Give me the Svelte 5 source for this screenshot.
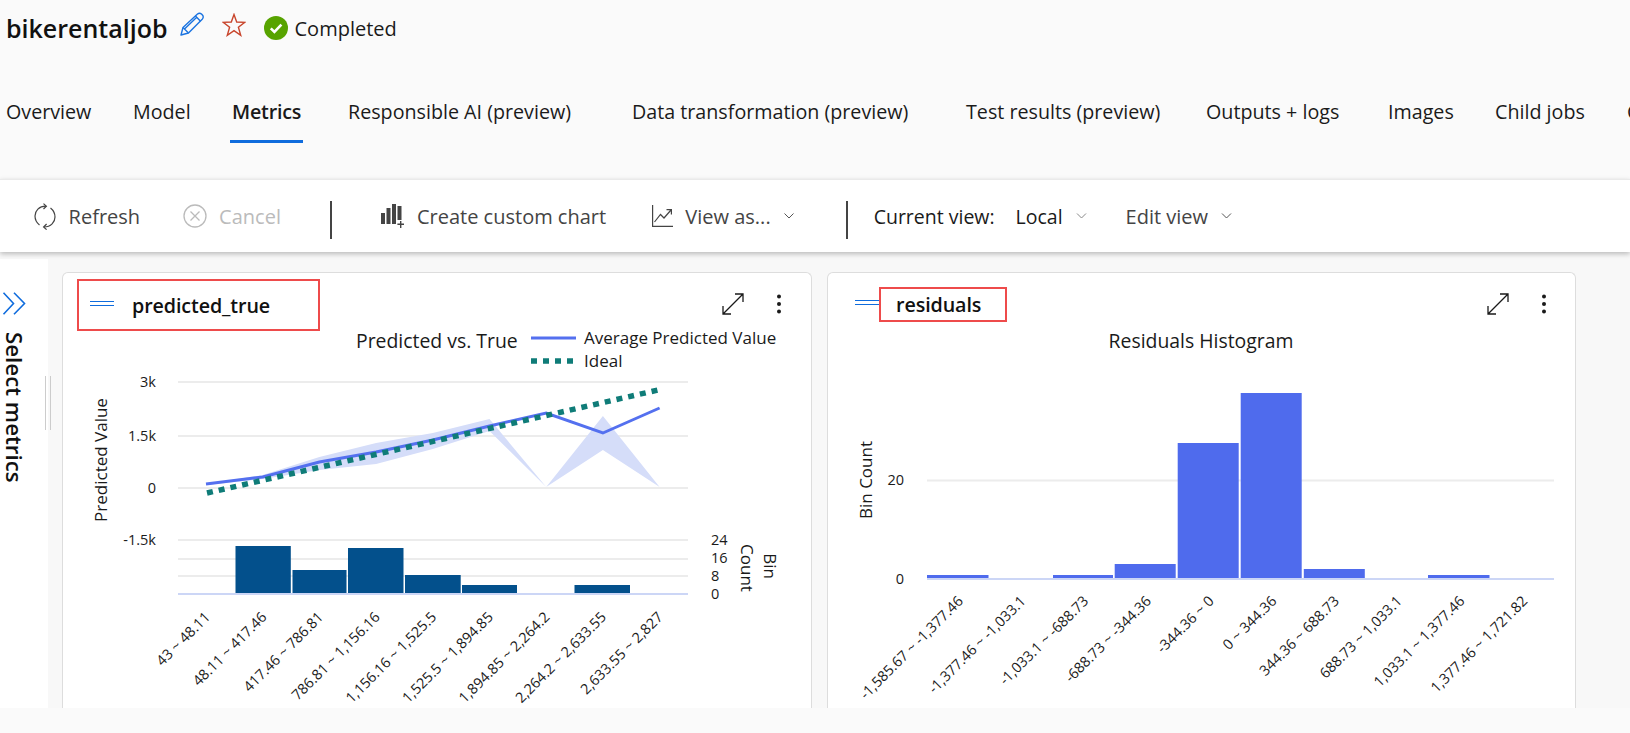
<script>
	const tabs = [
		{ label: 'Overview', w: 127 },
		{ label: 'Model', w: 99 },
		{ label: 'Metrics', w: 116, active: true },
		{ label: 'Responsible AI (preview)', w: 284 },
		{ label: 'Data transformation (preview)', w: 334 },
		{ label: 'Test results (preview)', w: 240 },
		{ label: 'Outputs + logs', w: 182 },
		{ label: 'Images', w: 107 },
		{ label: 'Child jobs', w: 132 },
		{ label: 'Code', w: 60 }
	];

	const pts = (a) => a.map((p) => p.join(',')).join(' ');

	const binX = (i) => 206 + i * 56.7;
	const avg = [485, 478, 463, 453, 441, 427, 414, 434, 409];
	const avgLine = pts(avg.map((y, i) => [binX(i), y]));
	const upper = [485, 476, 458, 444, 434, 420, 488, 417, 488];
	const lower = [486, 480, 471, 465, 450, 432, 488, 451, 488];
	const band = pts([
		...upper.map((y, i) => [binX(i), y]),
		...lower.map((y, i) => [binX(i), y]).reverse()
	]);

	const countBars = [
		[235.5, 55.3, 547],
		[292.5, 54, 571],
		[348, 55.5, 549],
		[405, 55.7, 576],
		[462, 55, 586],
		[574.5, 55.5, 586]
	];
	const predLabels = [
		'43 ~ 48.11', '48.11 ~ 417.46', '417.46 ~ 786.81', '786.81 ~ 1,156.16', '1,156.16 ~ 1,525.5',
		'1,525.5 ~ 1,894.85', '1,894.85 ~ 2,264.2', '2,264.2 ~ 2,633.55', '2,633.55 ~ 2,827'
	];

	const resBars = [
		[927, 61.5, 576],
		[1053, 60, 576],
		[1114.7, 61, 565],
		[1177.7, 61, 444],
		[1240.7, 61, 394],
		[1303.8, 61, 570],
		[1428, 61.5, 576]
	];
	const resLabels = [
		'-1,585.67 ~ -1,377.46', '-1,377.46 ~ -1,033.1', '-1,033.1 ~ -688.73', '-688.73 ~ -344.36', '-344.36 ~ 0',
		'0 ~ 344.36', '344.36 ~ 688.73', '688.73 ~ 1,033.1', '1,033.1 ~ 1,377.46', '1,377.46 ~ 1,721.82'
	];
</script>

<div class="page">
	<header class="title-row">
		<h1>bikerentaljob</h1>
		<svg class="pencil" width="24" height="24" viewBox="0 0 24 24" fill="none" stroke="#1a73e0" stroke-width="1.4" stroke-linejoin="round">
			<path d="M1 23 L3 15.5 L17.5 2 Q19.5 .3 21.5 2 L22.6 3.2 Q24 5.2 22.2 7.2 L8.5 21 Z" />
			<path d="M3 15.5 L8.5 21 M15.5 4 L20.5 9.2 M4.5 17 L16.5 5.5" />
		</svg>
		<svg class="star" width="24" height="24" viewBox="0 0 24 24" fill="none" stroke="#c8452c" stroke-width="1.4" stroke-linejoin="miter">
			<polygon points="12,1.5 14.7,9 22.8,9.3 16.4,14.3 18.7,22.3 12,17.6 5.3,22.3 7.6,14.3 1.2,9.3 9.3,9" />
		</svg>
		<svg class="check" width="24" height="24" viewBox="0 0 24 24">
			<circle cx="12" cy="12" r="12" fill="#57a300" />
			<path d="M6.8 12.4 L10.4 16 L17.4 8.6" fill="none" stroke="#fff" stroke-width="2.6" />
		</svg>
		<span class="status">Completed</span>
	</header>

	<nav class="tabs">
		{#each tabs as tab}
			<div class="tab" class:active={tab.active} style="width: {tab.w}px"><span>{tab.label}</span></div>
		{/each}
	</nav>

	<div class="toolbar">
		<svg class="ico refresh" width="22" height="27" viewBox="0 0 22 27" fill="none" stroke="#444" stroke-width="1.2">
			<path d="M12 3.2 C5 3 1 8 1 13 C1 17 3 20 5.5 22" />
			<path d="M10 24 C17 24 21 19 21 14 C21 10 19 7 16.5 5" />
			<path d="M9.5 .6 L12.4 3.2 L9.5 6 M12.6 21 L9.6 24 L12.6 26.6" />
		</svg>
		<span class="btn refresh-label">Refresh</span>
		<svg class="ico cancel" width="24" height="24" viewBox="0 0 24 24" fill="none" stroke="#bbb" stroke-width="1.3">
			<circle cx="12" cy="12" r="11" />
			<path d="M7.5 7.5 L16.5 16.5 M16.5 7.5 L7.5 16.5" />
		</svg>
		<span class="btn disabled">Cancel</span>
		<i class="sep first"></i>
		<svg class="ico chart" width="24" height="24" viewBox="0 0 24 24" fill="#444">
			<rect x="0" y="9" width="4" height="11" />
			<rect x="5.5" y="4" width="4" height="16" />
			<rect x="11" y="0" width="4" height="20" />
			<rect x="16.5" y="2" width="4" height="14" />
			<path d="M19 17 h1.4 v2.6 H23 V21 h-2.6 v3 H19 v-3 h-2.6 v-1.4 H19 Z" />
		</svg>
		<span class="btn create">Create custom chart</span>
		<svg class="ico line" width="21" height="22" viewBox="0 0 21 22" fill="none" stroke="#444" stroke-width="1.2">
			<path d="M.6 0 V21.4 H21" />
			<path d="M2.5 17 L8.5 9.5 L12 13 L19 5 M14.5 4.6 H19.4 V9.5" />
		</svg>
		<span class="btn view-as">View as...</span>
		<svg class="chev" width="10" height="6" viewBox="0 0 10 6" fill="none" stroke="#555"><path d="M.5 .5 L5 5 L9.5 .5" /></svg>
		<i class="sep second"></i>
		<span class="current">Current view:</span>
		<span class="local">Local</span>
		<svg class="chev" width="11" height="6" viewBox="0 0 10 6" fill="none" stroke="#888"><path d="M.5 .5 L5 5 L9.5 .5" /></svg>
		<span class="btn edit">Edit view</span>
		<svg class="chev" width="11" height="6" viewBox="0 0 10 6" fill="none" stroke="#555"><path d="M.5 .5 L5 5 L9.5 .5" /></svg>
	</div>

	<main class="main">
		<aside class="sidebar">
			<svg width="24" height="23" viewBox="0 0 24 23" fill="none" stroke="#0f6cdd" stroke-width="1.6">
				<path d="M1.5 .8 L11.5 11.5 L1.5 22.2 M12 .8 L22.5 11.5 L12 22.2" />
			</svg>
			<div class="side-label">Select metrics</div>
		</aside>
		<div class="handle"></div>

		<section class="card">
			<div class="card-head">
				<div class="marked first-mark">
					<div class="grip"></div>
					<span class="name">predicted_true</span>
				</div>
				{@render actions()}
			</div>
			<svg class="plot" width="748" height="377" viewBox="63 331 748 377">
				<text class="title" x="356" y="349">Predicted vs. True</text>
				<line class="legend-a" x1="531" x2="576" y1="339" y2="339" />
				<line class="legend-b" x1="531" x2="576" y1="362" y2="362" />
				<text class="legend" x="584" y="345">Average Predicted Value</text>
				<text class="legend" x="584" y="368">Ideal</text>

				{#each [383, 437, 489, 541, 560, 577] as y}
					<line class="grid" x1="178" x2="688" y1={y} y2={y} />
				{/each}
				{#each [['3k', 383], ['1.5k', 437], ['0', 489], ['-1.5k', 541]] as [t, y]}
					<text class="tick end" x="156" y={y + 5}>{t}</text>
				{/each}
				<text class="axis" transform="translate(107 461) rotate(-90)">Predicted Value</text>

				<polygon class="band" points={band} />
				<polyline class="avg" points={avgLine} />
				<line class="ideal" x1="207" y1="494" x2="658" y2="391" />

				{#each countBars as [x, w, top]}
					<rect class="count-bar" x={x} y={top} width={w} height={595 - top} />
				{/each}
				<line class="base" x1="178" x2="688" y1="595" y2="595" />
				{#each [['24', 541], ['16', 559], ['8', 577], ['0', 595]] as [t, y]}
					<text class="tick" x="711" y={y + 5}>{t}</text>
				{/each}
				<text class="axis" transform="translate(741 569) rotate(90)">Count</text>
				<text class="axis" transform="translate(764 567) rotate(90)">Bin</text>

				{#each predLabels as label, i}
					<text class="xlab" transform="translate({211 + i * 56.6} 619) rotate(-45)">{label}</text>
				{/each}
			</svg>
		</section>

		<section class="card">
			<div class="card-head second-head">
				<div class="grip"></div>
				<div class="marked second-mark">
					<span class="name">residuals</span>
				</div>
				{@render actions()}
			</div>
			<svg class="plot" width="747" height="377" viewBox="828 331 747 377">
				<text class="title mid" x="1201" y="349">Residuals Histogram</text>
				<line class="grid" x1="927" x2="1554" y1="481.5" y2="481.5" />
				<text class="tick end" x="904" y="486">20</text>
				<text class="tick end" x="904" y="585">0</text>
				<text class="axis" transform="translate(872 481) rotate(-90)">Bin Count</text>
				{#each resBars as [x, w, top]}
					<rect class="res-bar" x={x} y={top} width={w} height={580 - top} />
				{/each}
				<line class="base" x1="927" x2="1554" y1="580" y2="580" />
				{#each resLabels as label, i}
					<text class="xlab" transform="translate({964 + i * 62.7} 603) rotate(-45)">{label}</text>
				{/each}
			</svg>
		</section>
	</main>
</div>

{#snippet actions()}
	<div class="actions">
		<svg width="22" height="22" viewBox="0 0 22 22" fill="none" stroke="#1a1a1a" stroke-width="1.3">
			<path d="M1 21 L21 1 M13 1 H21 V9 M1 13 V21 H9" />
		</svg>
		<svg class="dots" width="6" height="20" viewBox="0 0 6 20" fill="#1a1a1a">
			<circle cx="3" cy="2.5" r="2" />
			<circle cx="3" cy="10" r="2" />
			<circle cx="3" cy="17.5" r="2" />
		</svg>
	</div>
{/snippet}

<style>
	:global(body) {
		margin: 0;
		background: #fafafa;
		overflow: hidden;
	}
	.page {
		width: 1630px;
		height: 733px;
		overflow: hidden;
		font-family: 'Open Sans', 'Noto Sans', sans-serif;
		color: #1a1a1a;
	}
	.title-row {
		display: flex;
		align-items: center;
		height: 56px;
		padding-left: 6px;
	}
	h1 {
		margin: 0;
		font-size: 25px;
		font-weight: 600;
		color: #111;
	}
	.pencil {
		margin: -8px 0 0 12px;
	}
	.star {
		margin: -6px 0 0 18px;
	}
	.check {
		margin: 0 0 0 18px;
	}
	.status {
		margin-left: 7px;
		font-size: 20px;
	}
	.tabs {
		display: flex;
		height: 123px;
		padding-left: 6px;
		box-sizing: border-box;
		padding-top: 40px;
		width: 1700px;
	}
	.tab {
		flex: none;
		font-size: 19.7px;
		line-height: 32px;
		white-space: nowrap;
	}
	.tab span {
		display: inline-block;
		height: 44px;
	}
	.tab.active {
		font-weight: 600;
		letter-spacing: -0.2px;
	}
	.tab.active span {
		border-bottom: 3px solid #0f6cdd;
		margin-left: -2px;
		padding: 0 2px;
	}
	.toolbar {
		display: flex;
		align-items: center;
		height: 73px;
		background: #fff;
		border-top: 1px solid #eaeaea;
		box-sizing: border-box;
		padding-left: 34px;
		box-shadow: 0 2px 5px rgba(0, 0, 0, 0.25);
		position: relative;
		z-index: 1;
		font-size: 20px;
		white-space: nowrap;
	}
	.btn {
		color: #444;
		font-weight: 500;
	}
	.refresh-label {
		margin-left: 12.6px;
	}
	.ico.cancel {
		margin-left: 43px;
	}
	.disabled {
		margin-left: 12px;
		color: #bbb;
		font-weight: 500;
	}
	.sep {
		display: block;
		width: 2px;
		height: 38px;
		background: #444;
		flex: none;
		margin-top: 8px;
	}
	.sep.first {
		margin-left: 49px;
	}
	.ico.chart {
		margin-left: 49px;
	}
	.create {
		margin-left: 12px;
	}
	.ico.line {
		margin-left: 45.5px;
	}
	.view-as {
		margin-left: 12.7px;
	}
	.chev {
		margin-left: 13px;
	}
	.sep.second {
		margin-left: 52px;
	}
	.current {
		margin-left: 26px;
		font-size: 19.5px;
	}
	.local {
		margin-left: 21px;
		font-size: 19.5px;
	}
	.edit {
		margin-left: 39px;
	}
	.main {
		display: flex;
		position: relative;
		height: 456px;
		background: #f8f8f8;
		padding-top: 20px;
		box-sizing: border-box;
		overflow: hidden;
	}
	.sidebar {
		position: absolute;
		left: 0;
		top: 7px;
		bottom: 0;
		width: 48px;
		background: #fff;
		box-sizing: border-box;
		padding: 33px 0 0 2px;
	}
	.side-label {
		writing-mode: vertical-rl;
		font-size: 22.3px;
		font-weight: 600;
		color: #111;
		margin-top: 12px;
		line-height: 24px;
	}
	.handle {
		position: absolute;
		left: 45px;
		top: 124px;
		width: 4px;
		height: 54px;
		border-left: 1px solid #ccc;
		border-right: 1px solid #ccc;
	}
	.card {
		flex: none;
		width: 750px;
		height: 440px;
		margin-left: 62px;
		box-sizing: border-box;
		background: #fff;
		border: 1px solid #ddd;
		border-bottom: 0;
		border-radius: 6px 6px 0 0;
	}
	.card + .card {
		margin-left: 15px;
		width: 749px;
	}
	.card-head {
		display: flex;
		align-items: flex-start;
		height: 57px;
		box-sizing: border-box;
		position: relative;
	}
	.marked {
		display: flex;
		align-items: center;
		box-sizing: border-box;
		border: 2px solid #ee4b4b;
	}
	.first-mark {
		width: 243px;
		height: 52px;
		margin: 6px 0 0 14px;
		padding-left: 11px;
	}
	.second-head {
		padding-left: 27px;
	}
	.second-head .grip {
		margin-top: 27px;
	}
	.second-mark {
		width: 128px;
		height: 35px;
		margin-top: 14px;
		padding-left: 15px;
	}
	.grip {
		flex: none;
		width: 24px;
		height: 5px;
		box-sizing: border-box;
		border-top: 1px solid #0f6cdd;
		border-bottom: 1px solid #0f6cdd;
	}
	.first-mark .grip {
		margin-top: -4px;
	}
	.name {
		font-size: 19.7px;
		font-weight: 600;
		color: #111;
		white-space: nowrap;
		letter-spacing: -0.1px;
	}
	.first-mark .name {
		margin-left: 18px;
	}
	.actions {
		margin-left: auto;
		display: flex;
		align-items: center;
		gap: 32px;
		margin-top: 20px;
		padding-right: 29px;
	}
	.second-head .actions {
		padding-right: 28px;
	}
	.plot {
		display: block;
		overflow: visible;
		font-family: 'Open Sans', 'Noto Sans', sans-serif;
	}
	.plot text {
		fill: #1a1a1a;
	}
	.title {
		font-size: 19.4px;
	}
	.title.mid {
		text-anchor: middle;
	}
	.legend {
		font-size: 17px;
	}
	.legend-a {
		stroke: #5470ef;
		stroke-width: 3;
	}
	.legend-b {
		stroke: #0f7c78;
		stroke-width: 5.5;
		stroke-dasharray: 6 6;
	}
	.grid {
		stroke: #ececec;
		stroke-width: 2;
	}
	.tick {
		font-size: 14.5px;
	}
	.end {
		text-anchor: end;
	}
	.axis {
		font-size: 17px;
		text-anchor: middle;
	}
	.band {
		fill: #d5ddf9;
	}
	.avg {
		fill: none;
		stroke: #5470ef;
		stroke-width: 3;
	}
	.ideal {
		stroke: #0f7c78;
		stroke-width: 5.5;
		stroke-dasharray: 6 6;
	}
	.count-bar {
		fill: #03508c;
	}
	.res-bar {
		fill: #4f6bed;
	}
	.base {
		stroke: #ccd6f6;
		stroke-width: 2;
	}
	.xlab {
		font-size: 14.4px;
		text-anchor: end;
	}
</style>
